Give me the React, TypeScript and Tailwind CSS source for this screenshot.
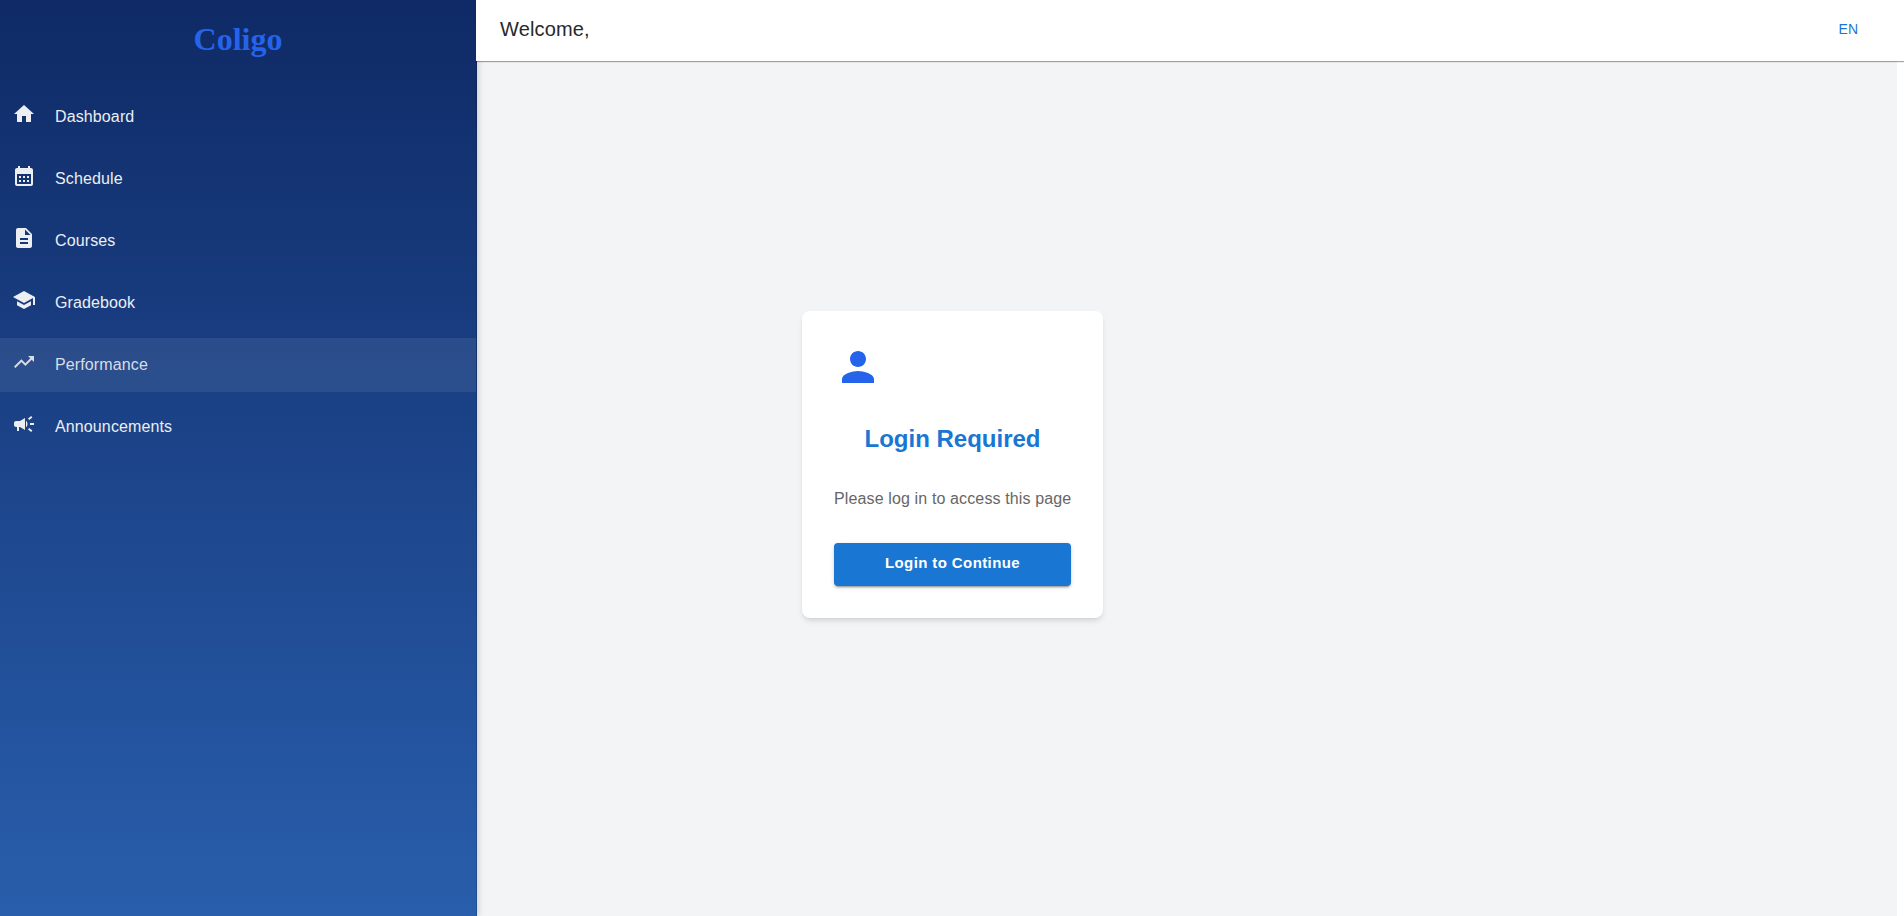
import React from "react";
import {
  MdHome,
  MdCalendarMonth,
  MdDescription,
  MdSchool,
  MdTrendingUp,
  MdCampaign,
  MdPerson,
} from "react-icons/md";

const items = [
  { label: "Dashboard", Icon: MdHome },
  { label: "Schedule", Icon: MdCalendarMonth },
  { label: "Courses", Icon: MdDescription },
  { label: "Gradebook", Icon: MdSchool },
  { label: "Performance", Icon: MdTrendingUp, active: true },
  { label: "Announcements", Icon: MdCampaign },
];

function Sidebar() {
  return (
    <aside className="z-10 -mr-px flex w-[477px] shrink-0 flex-col border-r border-black/15 bg-linear-to-b from-[#0f2a66] via-[#1c448a] to-[#295eac] shadow-[2px_0_5px_rgba(0,0,0,0.14)]">
      <h1 className="flex h-20 items-center justify-center pb-0.5 font-['Liberation_Serif',serif] text-[32px] leading-none font-bold text-[#2563eb]">
        Coligo
      </h1>
      <nav className="flex flex-col gap-2 pt-2.5">
        {items.map(({ label, Icon, active }) => (
          <a
            key={label}
            className={
              active
                ? "flex h-[54px] items-start bg-white/8 px-3 py-3 text-[#d7dce8]"
                : "flex h-[54px] items-start px-3 py-3 text-[#eceef2]"
            }
          >
            <Icon size={24} />
            <span className="mt-[3px] ml-[19px] text-base leading-6 tracking-[0.12px]">{label}</span>
          </a>
        ))}
      </nav>
    </aside>
  );
}

function Header() {
  return (
    <header className="z-20 flex h-[61px] shrink-0 items-center justify-between bg-white pr-[46px] pb-1 pl-6 shadow-[0_1px_1px_rgba(0,0,0,0.35)]">
      <span className="text-xl tracking-[0.15px] text-[#27292c]">Welcome,</span>
      <button className="text-sm text-[#1976d2]">EN</button>
    </header>
  );
}

function LoginCard() {
  return (
    <section className="flex h-[307px] w-[301px] flex-col rounded-lg bg-white p-8 shadow-md">
      <MdPerson size={48} className="text-[#2563eb]" />
      <h2 className="mt-8 text-center text-2xl leading-8 font-bold text-[#1976d2]">
        Login Required
      </h2>
      <p className="mt-8 text-center text-base leading-6 tracking-[0.13px] whitespace-nowrap text-[#666666]">
        Please log in to access this page
      </p>
      <button className="mt-8 h-[43px] w-full rounded bg-[#1976d2] pb-0.5 text-[15px] font-bold tracking-[0.4px] text-white shadow-[0_3px_1px_-2px_rgba(0,0,0,0.2),0_2px_2px_0_rgba(0,0,0,0.14),0_1px_5px_0_rgba(0,0,0,0.12)]">
        Login to Continue
      </button>
    </section>
  );
}

export default function App() {
  return (
    <div className="flex h-[916px] w-full overflow-hidden bg-white font-['Liberation_Sans',Arial,sans-serif]">
      <Sidebar />
      <div className="flex min-w-0 flex-1 flex-col">
        <Header />
        <main className="mr-[7px] ml-px flex flex-1 items-start bg-gray-100 pt-[250px] pl-[325px]">
          <LoginCard />
        </main>
      </div>
    </div>
  );
}
